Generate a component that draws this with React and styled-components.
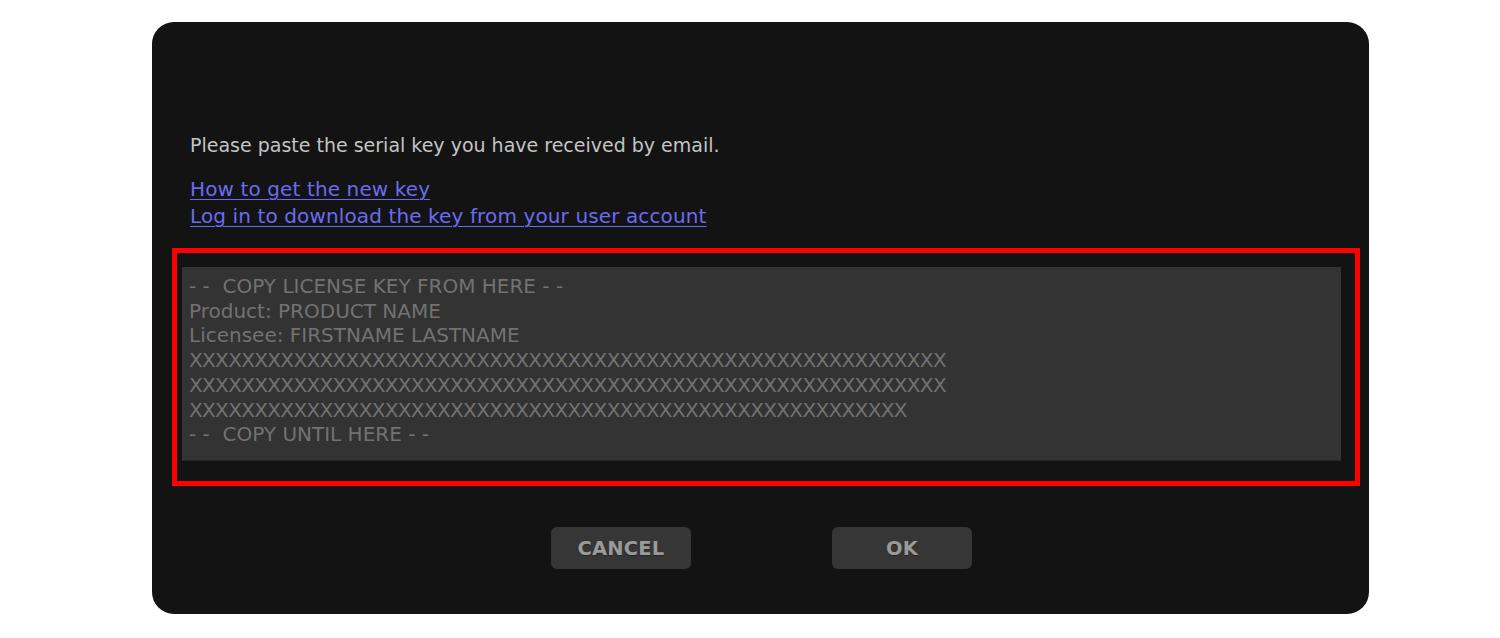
import React from "react";
import styled, { createGlobalStyle } from "styled-components";

const Global = createGlobalStyle`
  html, body { margin: 0; padding: 0; background: #ffffff; }
  body { font-family: "DejaVu Sans", "Liberation Sans", sans-serif; }
`;

const Page = styled.div`
  width: 1500px;
  height: 638px;
  padding: 22px 0 0 152px;
  box-sizing: border-box;
`;

const Dialog = styled.div`
  width: 1217px;
  height: 592px;
  box-sizing: border-box;
  background: #131313;
  border-radius: 22px;
  padding: 110px 9px 45px 20px;
  display: flex;
  flex-direction: column;
`;

const Intro = styled.div`
  padding-left: 18px;
  font-size: 19px;
  line-height: 27px;
  color: #c4c4c4;
`;

const Message = styled.p`
  margin: 0 0 17px 0;
`;

const LinkList = styled.div`
  display: flex;
  flex-direction: column;
  align-items: flex-start;
`;

const Link = styled.a`
  color: #6b6bf2;
  font-size: 20px;
  letter-spacing: 0.12px;
  text-decoration: underline;
  text-underline-offset: 3px;
  text-decoration-thickness: 1px;
  cursor: pointer;
`;

const Highlight = styled.div`
  margin-top: 18px;
  height: 238px;
  box-sizing: border-box;
  border: 5px solid #ff0000;
  padding: 14px 14px 20px 5px;
  display: flex;
`;

const KeyArea = styled.div`
  flex: 1;
  background: #333333;
  border-bottom: 1px solid #262626;
  padding: 7px 7px;
  font-size: 20px;
  line-height: 24.7px;
  color: #727272;
  overflow: hidden;
`;

const KeyLine = styled.div`
  white-space: pre;
  letter-spacing: ${(p) => (p.$dense ? "-0.65px" : "0")};
`;

const Buttons = styled.div`
  margin-top: 41px;
  padding-right: 9px;
  display: flex;
  justify-content: center;
  gap: 141px;
`;

const Button = styled.button`
  width: 140px;
  height: 42px;
  border: none;
  border-radius: 6px;
  background: #363636;
  color: #9a9a9a;
  font-family: "DejaVu Sans", "Liberation Sans", sans-serif;
  font-weight: bold;
  font-size: 19.5px;
  letter-spacing: 0.2px;
  text-shadow: 0 1px 1px rgba(0, 0, 0, 0.35);
  cursor: pointer;
  padding: 0;
`;

const keyLines = [
  { text: "- -  COPY LICENSE KEY FROM HERE - -" },
  { text: "Product: PRODUCT NAME" },
  { text: "Licensee: FIRSTNAME LASTNAME" },
  { text: "X".repeat(58), dense: true },
  { text: "X".repeat(58), dense: true },
  { text: "X".repeat(55), dense: true },
  { text: "- -  COPY UNTIL HERE - -" },
];

export default function App() {
  return (
    <>
      <Global />
      <Page>
        <Dialog>
          <Intro>
            <Message>Please paste the serial key you have received by email.</Message>
            <LinkList>
              <Link>How to get the new key</Link>
              <Link>Log in to download the key from your user account</Link>
            </LinkList>
          </Intro>
          <Highlight>
            <KeyArea>
              {keyLines.map((l, i) => (
                <KeyLine key={i} $dense={l.dense}>
                  {l.text}
                </KeyLine>
              ))}
            </KeyArea>
          </Highlight>
          <Buttons>
            <Button>CANCEL</Button>
            <Button>OK</Button>
          </Buttons>
        </Dialog>
      </Page>
    </>
  );
}
